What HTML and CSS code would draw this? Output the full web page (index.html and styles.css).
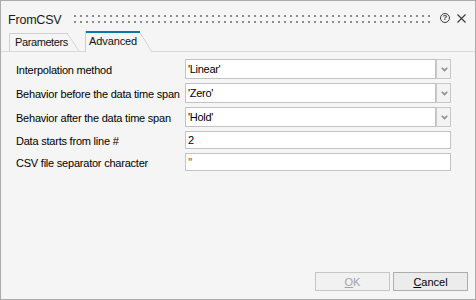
FILE: index.html
```html
<!DOCTYPE html>
<html>
<head>
<meta charset="utf-8">
<link rel="stylesheet" href="styles.css">
</head>
<body>
<div class="win">
  <div class="titlebar">
    <span class="title">FromCSV</span>
    <div class="grip"></div>
    <span class="help">?</span>
    <svg class="close" width="9" height="9" viewBox="0 0 9 9"><path d="M0.5 0.5 L8.5 8.5 M8.5 0.5 L0.5 8.5" stroke="#3a3a3a" stroke-width="1.1" fill="none"/></svg>
  </div>
  <div class="tabs">
    <div class="tab">Parameters</div>
    <div class="tab active">Advanced</div>
  </div>
  <div class="form">
    <div class="row">
      <span class="label">Interpolation method</span>
      <div class="combo"><div class="field">'Linear'</div><div class="drop"><svg width="7" height="5" viewBox="0 0 7 5"><path d="M0.8 0.8 L3.5 3.6 L6.2 0.8" stroke="#8a8a8a" stroke-width="1.6" fill="none"/></svg></div></div>
    </div>
    <div class="row">
      <span class="label">Behavior before the data time span</span>
      <div class="combo"><div class="field">'Zero'</div><div class="drop"><svg width="7" height="5" viewBox="0 0 7 5"><path d="M0.8 0.8 L3.5 3.6 L6.2 0.8" stroke="#8a8a8a" stroke-width="1.6" fill="none"/></svg></div></div>
    </div>
    <div class="row">
      <span class="label">Behavior after the data time span</span>
      <div class="combo"><div class="field">'Hold'</div><div class="drop"><svg width="7" height="5" viewBox="0 0 7 5"><path d="M0.8 0.8 L3.5 3.6 L6.2 0.8" stroke="#8a8a8a" stroke-width="1.6" fill="none"/></svg></div></div>
    </div>
    <div class="row short">
      <span class="label">Data starts from line #</span>
      <div class="text">2</div>
    </div>
    <div class="row short">
      <span class="label">CSV file separator character</span>
      <div class="text"><span class="quote">''</span></div>
    </div>
  </div>
  <div class="footer">
    <button class="btn disabled"><u>O</u>K</button>
    <button class="btn"><u>C</u>ancel</button>
  </div>
</div>
</body>
</html>
```

FILE: styles.css
```css
html, body {
  margin: 0;
  padding: 0;
}
body {
  background: #f5f5f5;
  font-family: "Liberation Sans", Arial, sans-serif;
  font-size: 11px;
  color: #000;
}
.win {
  box-sizing: border-box;
  width: 476px;
  height: 300px;
  border: 1px solid #ababab;
  background: #f5f5f5;
  display: flex;
  flex-direction: column;
}
.titlebar {
  height: 30px;
  box-sizing: border-box;
  padding: 12px 9px 0 7px;
  display: flex;
  align-items: flex-start;
}
.title {
  width: 66px;
  font-size: 12.5px;
  line-height: 14px;
  color: #1a1a1a;
  letter-spacing: -0.2px;
}
.grip {
  width: 356px;
  height: 8px;
  margin-top: 2px;
  background-image:
    linear-gradient(to right, #8c8c8c 2px, transparent 2px),
    linear-gradient(to right, #8c8c8c 2px, transparent 2px);
  background-size: 6px 2px, 6px 2px;
  background-position: 0 0, 0 6px;
  background-repeat: repeat-x, repeat-x;
}
.help {
  box-sizing: border-box;
  width: 10px;
  height: 10px;
  margin-left: 10px;
  border: 1px solid #3a3a3a;
  border-radius: 50%;
  font-size: 8px;
  font-weight: bold;
  line-height: 8px;
  text-align: center;
  color: #3a3a3a;
}
.close {
  margin-left: 7px;
  margin-top: 1px;
  display: block;
}
.tabs {
  height: 21px;
  box-sizing: border-box;
  border-bottom: 1px solid #dadada;
  padding-left: 8px;
  display: flex;
  align-items: flex-end;
}
.tab {
  box-sizing: border-box;
  position: relative;
  height: 18px;
  width: 70px;
  border-left: 1px solid #cfcfcf;
  padding-left: 5px;
  line-height: 18px;
  letter-spacing: -0.4px;
  color: #111;
  background:
    linear-gradient(#cfcfcf, #cfcfcf) left top / calc(100% - 11px) 1px no-repeat,
    linear-gradient(to top right, transparent calc(50% - 0.7px), #cfcfcf 50%, transparent calc(50% + 0.7px)) right top / 12px 100% no-repeat;
}
.tab.active {
  height: 21px;
  width: 67px;
  margin-left: 6px;
  margin-bottom: -1px;
  padding-left: 3px;
  padding-top: 1px;
  line-height: 19px;
  letter-spacing: -0.1px;
  background:
    linear-gradient(#0a79a6, #0a79a6) left top / calc(100% - 12px) 2px no-repeat,
    linear-gradient(to top right, transparent calc(50% - 0.7px), #cfcfcf 50%, transparent calc(50% + 0.7px)) right top / 13px 100% no-repeat,
    #f5f5f5;
}
.form {
  padding: 7px 0 0 15px;
  display: flex;
  flex-direction: column;
  gap: 4px;
}
.row {
  display: flex;
  align-items: center;
  height: 20px;
}
.row.short {
  height: 18px;
}
.label {
  width: 169px;
  letter-spacing: -0.22px;
  padding-top: 1px;
  white-space: nowrap;
}
.combo {
  display: flex;
  height: 20px;
}
.field {
  box-sizing: border-box;
  width: 251px;
  height: 20px;
  border: 1px solid #c3c3c3;
  background: #fff;
  padding: 2px 0 0 2px;
  line-height: 15px;
  letter-spacing: -0.3px;
}
.drop {
  box-sizing: border-box;
  width: 15px;
  height: 20px;
  border: 1px solid #c8c8c8;
  background: #f3f3f3;
  display: flex;
  align-items: center;
  justify-content: center;
}
.drop svg {
  display: block;
  margin-left: 1px;
}
.text {
  box-sizing: border-box;
  width: 266px;
  height: 18px;
  border: 1px solid #c3c3c3;
  background: #fff;
  padding: 1px 0 0 2px;
  line-height: 15px;
}
.quote {
  color: #e07a1c;
  font-weight: bold;
  letter-spacing: -0.5px;
}
.footer {
  margin-top: auto;
  display: flex;
  justify-content: flex-end;
  gap: 3px;
  padding: 0 7px 8px 0;
}
.btn {
  box-sizing: border-box;
  width: 75px;
  height: 19px;
  margin: 0;
  padding: 0;
  border: 1px solid #adadad;
  background: #ececec;
  font-family: "Liberation Sans", Arial, sans-serif;
  font-size: 11px;
  line-height: 16px;
  color: #000;
  border-radius: 0;
}
.btn.disabled {
  border-color: #c6c6c6;
  background: #f1f1f1;
  color: #a3a3a3;
}
```
